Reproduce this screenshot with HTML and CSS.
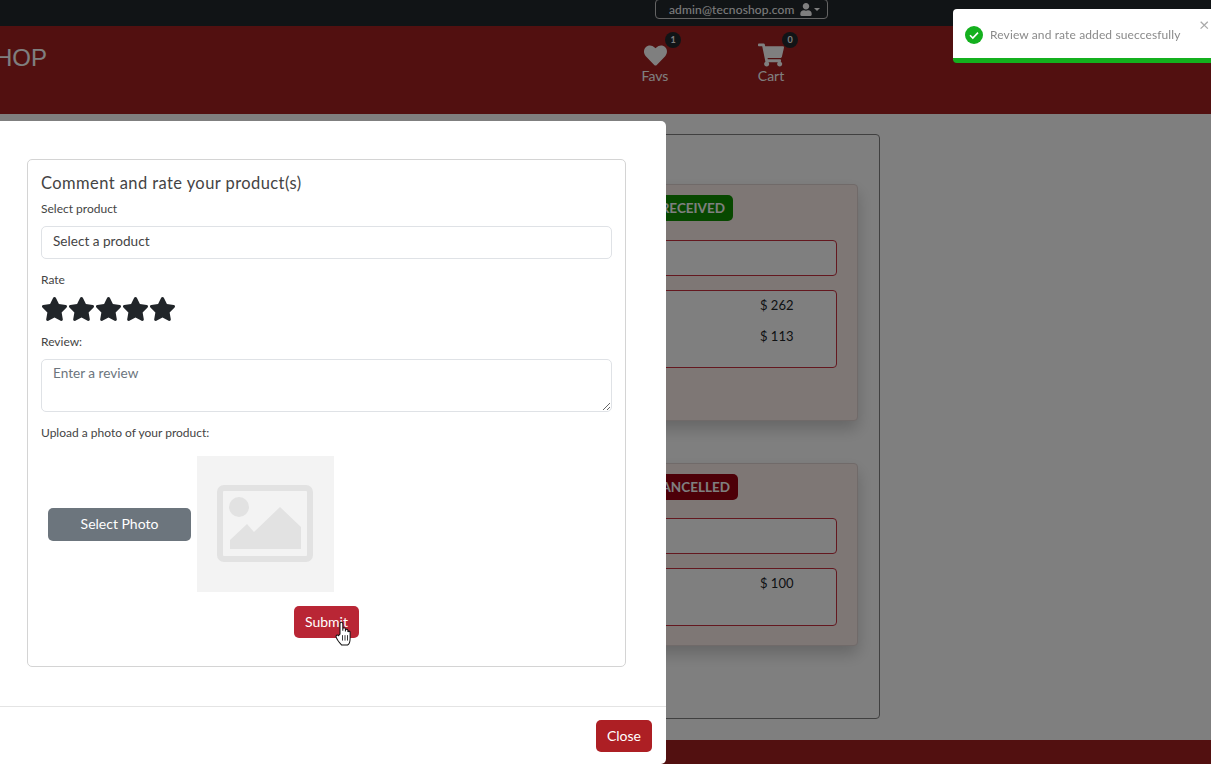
FILE: index.html
```html
<!DOCTYPE html>
<html lang="en">
<head>
    <meta charset="UTF-8">
    <meta name="viewport" content="width=device-width, initial-scale=1.0">
    <title>TecnoShop</title>
    <link rel="stylesheet" href="styles.css">
</head>
<body>
    <div class="topbar">
        <button class="user-btn">
            admin@tecnoshop.com
            <svg class="user-icon" viewBox="0 0 448 512"><path d="M224 256c70.7 0 128-57.3 128-128S294.7 0 224 0 96 57.3 96 128s57.3 128 128 128zm89.6 32h-16.7c-22.2 10.2-46.9 16-72.9 16s-50.6-5.8-72.9-16h-16.7C60.2 288 0 348.2 0 422.4V464c0 26.5 21.5 48 48 48h352c26.5 0 48-21.5 48-48v-41.6c0-74.2-60.2-134.4-134.4-134.4z"/></svg>
            <span class="caret"></span>
        </button>
    </div>
    <div class="header">
        <div class="logo">TECNOSHOP</div>
        <div class="header-link favs">
            <span class="count">1</span>
            <svg class="heart" viewBox="0 0 512 512"><path d="M462.3 62.6C407.5 15.9 326 24.3 275.7 76.2L256 96.5l-19.7-20.3C186.1 24.3 104.5 15.9 49.7 62.6c-62.8 53.6-66.1 149.8-9.9 207.9l193.5 199.8c12.5 12.9 32.8 12.9 45.3 0l193.5-199.8c56.3-58.1 53-154.3-9.8-207.9z"/></svg>
            <span>Favs</span>
        </div>
        <div class="header-link cart">
            <span class="count">0</span>
            <svg class="cart-icon" viewBox="0 0 576 512"><path d="M528.12 301.319l47.273-208C578.806 78.301 567.391 64 551.99 64H159.208l-9.166-44.81C147.758 8.021 137.93 0 126.529 0H24C10.745 0 0 10.745 0 24v16c0 13.255 10.745 24 24 24h69.883l70.248 343.435C147.325 417.1 136 435.222 136 456c0 30.928 25.072 56 56 56s56-25.072 56-56c0-15.674-6.447-29.835-16.824-40h209.647C430.447 426.165 424 440.326 424 456c0 30.928 25.072 56 56 56s56-25.072 56-56c0-22.172-12.888-41.332-31.579-50.405l5.517-24.276c3.413-15.018-8.002-29.319-23.403-29.319H218.117l-6.545-32h293.145c11.206 0 20.92-7.754 23.403-18.681z"/></svg>
            <span>Cart</span>
        </div>
    </div>
    <div class="main">
        <div class="orders">
            <div class="order order-first">
                <div class="order-top"><span class="badge received">ORDER RECEIVED</span></div>
                <div class="box box-info"></div>
                <div class="box box-items">
                    <div class="price">$ 262</div>
                    <div class="price">$ 113</div>
                </div>
            </div>
            <div class="order">
                <div class="order-top"><span class="badge cancelled">ORDER CANCELLED</span></div>
                <div class="box box-info"></div>
                <div class="box box-items short">
                    <div class="price">$ 100</div>
                </div>
            </div>
        </div>
    </div>
    <div class="footer"></div>

    <div class="backdrop"></div>

    <div class="modal">
        <div class="modal-body">
            <form class="review-card">
                <div class="review-title">Comment and rate your product(s)</div>
                <label class="field-label">Select product</label>
                <select class="field select-field">
                    <option>Select a product</option>
                </select>
                <label class="field-label rate-label">Rate</label>
                <div class="stars">
                    <svg viewBox="0 0 576 512"><path d="M259.3 17.8L194 150.2 47.9 171.5c-26.2 3.8-36.7 36.1-17.7 54.6l105.7 103-25 145.5c-4.5 26.3 23.2 46 46.4 33.7L288 439.6l130.7 68.7c23.2 12.2 50.9-7.4 46.4-33.7l-25-145.5 105.7-103c19-18.5 8.5-50.8-17.7-54.6L382 150.2 316.7 17.8c-11.7-23.6-45.6-23.9-57.4 0z"/></svg>
                    <svg viewBox="0 0 576 512"><path d="M259.3 17.8L194 150.2 47.9 171.5c-26.2 3.8-36.7 36.1-17.7 54.6l105.7 103-25 145.5c-4.5 26.3 23.2 46 46.4 33.7L288 439.6l130.7 68.7c23.2 12.2 50.9-7.4 46.4-33.7l-25-145.5 105.7-103c19-18.5 8.5-50.8-17.7-54.6L382 150.2 316.7 17.8c-11.7-23.6-45.6-23.9-57.4 0z"/></svg>
                    <svg viewBox="0 0 576 512"><path d="M259.3 17.8L194 150.2 47.9 171.5c-26.2 3.8-36.7 36.1-17.7 54.6l105.7 103-25 145.5c-4.5 26.3 23.2 46 46.4 33.7L288 439.6l130.7 68.7c23.2 12.2 50.9-7.4 46.4-33.7l-25-145.5 105.7-103c19-18.5 8.5-50.8-17.7-54.6L382 150.2 316.7 17.8c-11.7-23.6-45.6-23.9-57.4 0z"/></svg>
                    <svg viewBox="0 0 576 512"><path d="M259.3 17.8L194 150.2 47.9 171.5c-26.2 3.8-36.7 36.1-17.7 54.6l105.7 103-25 145.5c-4.5 26.3 23.2 46 46.4 33.7L288 439.6l130.7 68.7c23.2 12.2 50.9-7.4 46.4-33.7l-25-145.5 105.7-103c19-18.5 8.5-50.8-17.7-54.6L382 150.2 316.7 17.8c-11.7-23.6-45.6-23.9-57.4 0z"/></svg>
                    <svg viewBox="0 0 576 512"><path d="M259.3 17.8L194 150.2 47.9 171.5c-26.2 3.8-36.7 36.1-17.7 54.6l105.7 103-25 145.5c-4.5 26.3 23.2 46 46.4 33.7L288 439.6l130.7 68.7c23.2 12.2 50.9-7.4 46.4-33.7l-25-145.5 105.7-103c19-18.5 8.5-50.8-17.7-54.6L382 150.2 316.7 17.8c-11.7-23.6-45.6-23.9-57.4 0z"/></svg>
                </div>
                <label class="field-label review-label">Review:</label>
                <textarea class="field review-text" placeholder="Enter a review"></textarea>
                <label class="field-label upload-label">Upload a photo of your product:</label>
                <div class="photo-row">
                    <button type="button" class="btn btn-photo">Select Photo</button>
                    <svg class="photo" viewBox="0 0 137 136">
                        <rect width="137" height="136" fill="#f3f3f3"/>
                        <rect x="23" y="32" width="90" height="71" rx="4" fill="none" stroke="#e2e2e2" stroke-width="6"/>
                        <circle cx="42" cy="51" r="10" fill="#e2e2e2"/>
                        <path d="M33 93V84L50 68l7 8 26-25 21 20v22z" fill="#e2e2e2"/>
                    </svg>
                </div>
                <div class="submit-row">
                    <span class="submit-wrap">
                        <button type="button" class="btn btn-submit">Submit</button>
                        <svg class="hand" viewBox="0 0 16 24" preserveAspectRatio="none"><path d="M5 13V3.500a1.400 1.400 0 0 1 2.800 0V10V8.500a1.300 1.300 0 0 1 2.600 0V10.500v-1a1.300 1.300 0 0 1 2.500 0V11a1.200 1.200 0 0 1 2.200 0V17c0 3-1.500 5.500-2.500 6H6.500C5.500 22 2 18 1.200 16c-.7-1.500 1-3 2.300-1.500z" fill="#fff" stroke="#111" stroke-width="1"/><path d="M7.500 14v5M10 14v5M12.500 14v5" stroke="#111" stroke-width=".8"/></svg>
                    </span>
                </div>
            </form>
        </div>
        <div class="modal-footer">
            <button type="button" class="btn btn-close">Close</button>
        </div>
    </div>

    <div class="toast">
        <svg class="toast-check" viewBox="0 0 18 18"><circle cx="9" cy="9" r="9" fill="#14b01e"/><path d="M5 9.300l2.800 2.800L13 6.600" fill="none" stroke="#fff" stroke-width="1.600"/></svg>
        <span class="toast-text">Review and rate added sueccesfully</span>
        <span class="toast-close">&times;</span>
    </div>
</body>
</html>
```
FILE: styles.css
```css
html, body{
    margin: 0;
    height: 100%;
    overflow: hidden;
}
body{
    background-color: white;
    font-family: "Lato", "Open Sans", sans-serif;
    color: #212529;
    display: flex;
    flex-direction: column;
    height: 764px;
}
button, select, textarea{
    font-family: inherit;
}

/* top bar */
.topbar{
    height: 26px;
    flex: none;
    background-color: #23282d;
    display: flex;
    padding-left: 655px;
    box-sizing: border-box;
}
.user-btn{
    width: 173px;
    height: 20px;
    margin-top: -1px;
    box-sizing: border-box;
    background: transparent;
    border: 1px solid #c8c8c8;
    border-radius: 4px;
    color: white;
    font-size: 12px;
    letter-spacing: 0.15px;
    padding: 0 0 0 13px;
    display: flex;
    align-items: center;
    white-space: nowrap;
}
.user-icon{
    width: 12px;
    height: 13px;
    fill: white;
    margin-left: 6px;
}
.caret{
    margin-left: 2px;
    border-top: 3px solid white;
    border-left: 3px solid transparent;
    border-right: 3px solid transparent;
}

/* header */
.header{
    height: 88px;
    flex: none;
    background-color: #a42020;
    display: flex;
    color: white;
}
.logo{
    width: 151px;
    margin-left: -105px;
    margin-top: 18px;
    font-family: "Liberation Sans", sans-serif;
    font-size: 24px;
    line-height: 28px;
    white-space: nowrap;
}
.header-link{
    position: relative;
    width: 60px;
    margin-top: 18px;
    display: flex;
    flex-direction: column;
    align-items: center;
    font-size: 14px;
    line-height: 20px;
}
.header-link span:last-child{
    margin-top: -1px;
}
.favs{
    margin-left: 579px;
}
.cart{
    margin-left: 56px;
}
.heart{
    width: 25px;
    height: 23px;
    fill: white;
}
.cart-icon{
    width: 26px;
    height: 24px;
    fill: white;
    margin-top: -1px;
}
.count{
    position: absolute;
    top: -12px;
    left: 40px;
    width: 16px;
    height: 16px;
    border-radius: 50%;
    background-color: #23282d;
    font-size: 9px;
    line-height: 16px;
    text-align: center;
    font-weight: bold;
}
.cart .count{
    left: 41px;
}

/* orders behind the modal */
.main{
    flex: 1;
    padding-top: 20px;
    padding-left: 300px;
    padding-bottom: 21px;
    display: flex;
    box-sizing: border-box;
}
.orders{
    width: 580px;
    border: 1px solid #808080;
    border-radius: 4px;
    box-sizing: border-box;
    padding: 49px 21px 0 20px;
}
.order{
    height: 183px;
    box-sizing: border-box;
    background-color: #fdeeeb;
    border: 1px solid #e0d4d2;
    border-radius: 4px;
    box-shadow: 0 8px 16px rgba(0, 0, 0, 0.2);
    padding: 10px 20px 0 20px;
}
.order-first{
    height: 237px;
    margin-bottom: 42px;
}
.order-top{
    display: flex;
    justify-content: flex-end;
    padding-right: 104px;
    margin-bottom: 18px;
}
.order-first .order-top{
    margin-bottom: 19px;
}
.order:not(.order-first) .order-top{
    padding-right: 99px;
}
.badge{
    height: 26px;
    padding: 0 8px;
    border-radius: 5px;
    color: white;
    font-size: 13.5px;
    font-weight: bold;
    line-height: 26px;
    white-space: nowrap;
}
.received{
    background-color: #0e9000;
}
.cancelled{
    background-color: #9a0010;
}
.box{
    border: 1px solid #c8303f;
    border-radius: 4px;
    background-color: white;
    box-sizing: border-box;
}
.box-info{
    height: 36px;
    margin-bottom: 14px;
}
.box-items{
    height: 78px;
    padding-top: 4px;
}
.short{
    height: 58px;
}
.price{
    font-size: 13px;
    line-height: 21px;
    margin-bottom: 10px;
    padding-left: 417px;
}
.footer{
    height: 24px;
    flex: none;
    background-color: #a42020;
}
.backdrop{
    position: fixed;
    top: 0;
    left: 0;
    width: 100%;
    height: 100%;
    background-color: rgba(0, 0, 0, 0.5);
}

/* modal */
.modal{
    position: fixed;
    top: 121px;
    left: -13px;
    width: 679px;
    height: 643px;
    background-color: white;
    border-radius: 5px;
    display: flex;
    flex-direction: column;
}
.modal-body{
    height: 586px;
    box-sizing: border-box;
    padding: 38px 40px 0 40px;
    border-bottom: 1px solid #e4e4e4;
}
.review-card{
    height: 508px;
    box-sizing: border-box;
    border: 1px solid #d4d4d4;
    border-radius: 5px;
    padding: 12px 13px 0 13px;
    display: flex;
    flex-direction: column;
}
.review-title{
    font-size: 16.5px;
    line-height: 22px;
    letter-spacing: 0.42px;
    color: #444;
}
.field-label{
    font-size: 12px;
    line-height: 16px;
    color: #444;
}
.review-title + .field-label{
    margin-top: 7px;
}
.field{
    border: 1px solid #dfe2e6;
    border-radius: 5px;
    background: white;
    font-size: 13.6px;
    color: #444;
    box-sizing: border-box;
    width: 100%;
}
.select-field{
    height: 33px;
    margin-top: 9px;
    padding: 0 11px 4px 11px;
    appearance: none;
}
.rate-label{
    margin-top: 13px;
}
.stars{
    display: flex;
    margin-top: 8px;
    height: 26px;
}
.stars svg{
    width: 27px;
    height: 26px;
    fill: #212529;
}
.review-label{
    margin-top: 12px;
}
.review-text{
    height: 53px;
    margin-top: 9px;
    padding: 5px 11px;
    resize: vertical;
}
.review-text::placeholder{
    color: #6c757d;
}
.upload-label{
    margin-top: 13px;
}
.photo-row{
    display: flex;
    align-items: center;
    margin-top: 15px;
    padding-left: 7px;
    gap: 6px;
}
.photo{
    width: 137px;
    height: 136px;
}
.btn{
    border: none;
    color: white;
    font-size: 14px;
    border-radius: 5px;
    padding: 0 0 2px 0;
}
.btn-photo{
    width: 143px;
    height: 33px;
    background-color: #6c757d;
}
.submit-row{
    display: flex;
    justify-content: center;
    margin-top: 14px;
}
.submit-wrap{
    position: relative;
    display: flex;
}
.btn-submit{
    width: 65px;
    height: 32px;
    background-color: #b92635;
}
.hand{
    position: absolute;
    top: 14px;
    left: 41px;
    width: 16px;
    height: 26px;
}
.modal-footer{
    display: flex;
    justify-content: flex-end;
    padding: 13px 14px 0 0;
}
.btn-close{
    width: 56px;
    height: 32px;
    background-color: #ad1f24;
}

/* toast */
.toast{
    position: fixed;
    top: 9px;
    left: 953px;
    width: 280px;
    height: 54px;
    box-sizing: border-box;
    background-color: white;
    border-bottom: 5px solid #14b01e;
    border-radius: 4px;
    display: flex;
    align-items: center;
    padding-left: 12px;
    font-size: 12px;
    letter-spacing: 0.12px;
    color: #8a8a8a;
}
.toast-check{
    width: 18px;
    height: 18px;
    margin-right: 7px;
    flex: none;
    margin-top: 3px;
}
.toast-text{
    white-space: nowrap;
    margin-top: 2px;
}
.toast-close{
    position: absolute;
    top: 5px;
    left: 246px;
    font-size: 18px;
    line-height: 20px;
    color: #aaa;
}
```
